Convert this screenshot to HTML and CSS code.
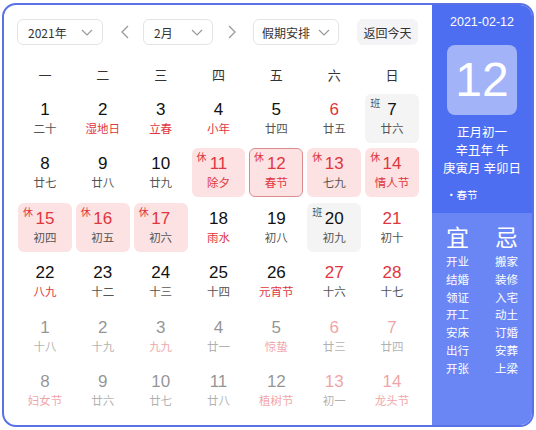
FILE: index.html
```html
<!DOCTYPE html>
<html lang="zh">
<head>
<meta charset="utf-8">
<link rel="stylesheet" href="styles.css">
</head>
<body>
<div class="cal">
  <div class="main">
    <div class="toolbar">
      <div class="select sel-year"><span>2021年</span><svg class="chev" viewBox="0 0 12 7"><path d="M1 1l5 5 5-5"/></svg></div>
      <svg class="arrow" viewBox="0 0 8 14"><path d="M7 1L1 7l6 6"/></svg>
      <div class="select sel-month"><span>2月</span><svg class="chev" viewBox="0 0 12 7"><path d="M1 1l5 5 5-5"/></svg></div>
      <svg class="arrow" viewBox="0 0 8 14"><path d="M1 1l6 6-6 6"/></svg>
      <div class="select sel-hol"><span>假期安排</span><svg class="chev" viewBox="0 0 12 7"><path d="M1 1l5 5 5-5"/></svg></div>
      <div class="today-btn">返回今天</div>
    </div>
    <div class="weekhead">
      <span>一</span><span>二</span><span>三</span><span>四</span><span>五</span><span>六</span><span>日</span>
    </div>
    <div class="grid">
      <div class="cell"><b class="n">1</b><i class="l">二十</i></div>
      <div class="cell"><b class="n">2</b><i class="l red">湿地日</i></div>
      <div class="cell"><b class="n">3</b><i class="l red">立春</i></div>
      <div class="cell"><b class="n">4</b><i class="l red">小年</i></div>
      <div class="cell"><b class="n">5</b><i class="l">廿四</i></div>
      <div class="cell"><b class="n red">6</b><i class="l">廿五</i></div>
      <div class="cell work"><em class="tag">班</em><b class="n">7</b><i class="l">廿六</i></div>

      <div class="cell"><b class="n">8</b><i class="l">廿七</i></div>
      <div class="cell"><b class="n">9</b><i class="l">廿八</i></div>
      <div class="cell"><b class="n">10</b><i class="l">廿九</i></div>
      <div class="cell rest"><em class="tag">休</em><b class="n red">11</b><i class="l red">除夕</i></div>
      <div class="cell rest sel"><em class="tag">休</em><b class="n red">12</b><i class="l red">春节</i></div>
      <div class="cell rest"><em class="tag">休</em><b class="n red">13</b><i class="l">七九</i></div>
      <div class="cell rest"><em class="tag">休</em><b class="n red">14</b><i class="l red">情人节</i></div>

      <div class="cell rest"><em class="tag">休</em><b class="n red">15</b><i class="l">初四</i></div>
      <div class="cell rest"><em class="tag">休</em><b class="n red">16</b><i class="l">初五</i></div>
      <div class="cell rest"><em class="tag">休</em><b class="n red">17</b><i class="l">初六</i></div>
      <div class="cell"><b class="n">18</b><i class="l red">雨水</i></div>
      <div class="cell"><b class="n">19</b><i class="l">初八</i></div>
      <div class="cell work"><em class="tag">班</em><b class="n">20</b><i class="l">初九</i></div>
      <div class="cell"><b class="n red">21</b><i class="l">初十</i></div>

      <div class="cell"><b class="n">22</b><i class="l red">八九</i></div>
      <div class="cell"><b class="n">23</b><i class="l">十二</i></div>
      <div class="cell"><b class="n">24</b><i class="l">十三</i></div>
      <div class="cell"><b class="n">25</b><i class="l">十四</i></div>
      <div class="cell"><b class="n">26</b><i class="l red">元宵节</i></div>
      <div class="cell"><b class="n red">27</b><i class="l">十六</i></div>
      <div class="cell"><b class="n red">28</b><i class="l">十七</i></div>

      <div class="cell other"><b class="n">1</b><i class="l">十八</i></div>
      <div class="cell other"><b class="n">2</b><i class="l">十九</i></div>
      <div class="cell other"><b class="n">3</b><i class="l red">九九</i></div>
      <div class="cell other"><b class="n">4</b><i class="l">廿一</i></div>
      <div class="cell other"><b class="n">5</b><i class="l red">惊蛰</i></div>
      <div class="cell other"><b class="n red">6</b><i class="l">廿三</i></div>
      <div class="cell other"><b class="n red">7</b><i class="l">廿四</i></div>

      <div class="cell other"><b class="n">8</b><i class="l red">妇女节</i></div>
      <div class="cell other"><b class="n">9</b><i class="l">廿六</i></div>
      <div class="cell other"><b class="n">10</b><i class="l">廿七</i></div>
      <div class="cell other"><b class="n">11</b><i class="l">廿八</i></div>
      <div class="cell other"><b class="n">12</b><i class="l red">植树节</i></div>
      <div class="cell other"><b class="n red">13</b><i class="l">初一</i></div>
      <div class="cell other"><b class="n red">14</b><i class="l red">龙头节</i></div>
    </div>
  </div>
  <div class="side">
    <div class="side-top">
      <div class="s-date">2021-02-12</div>
      <div class="s-day">12</div>
      <div class="s-lunar">正月初一<br>辛丑年 牛<br>庚寅月 辛卯日</div>
      <div class="s-fest">•春节</div>
    </div>
    <div class="side-bottom">
      <div class="yj">
        <div class="yj-head">宜</div>
        <div>开业</div><div>结婚</div><div>领证</div><div>开工</div><div>安床</div><div>出行</div><div>开张</div>
      </div>
      <div class="yj">
        <div class="yj-head">忌</div>
        <div>搬家</div><div>装修</div><div>入宅</div><div>动土</div><div>订婚</div><div>安葬</div><div>上梁</div>
      </div>
    </div>
  </div>
</div>
</body>
</html>
```

FILE: styles.css
```css
html, body {
  margin: 0;
  padding: 0;
  background: #fff;
}
body {
  font-family: "Noto Sans CJK SC", "Liberation Sans", sans-serif;
  color: #333;
}
.cal {
  margin: 3px 2px;
  width: 532px;
  height: 424px;
  box-sizing: border-box;
  border: 2px solid #5872e6;
  border-radius: 14px;
  overflow: hidden;
  display: flex;
}
.main {
  width: 428px;
  padding: 14px 13px 0 14px;
  box-sizing: border-box;
}
.toolbar {
  display: flex;
  align-items: center;
  height: 26px;
  margin-left: -1px;
}
.select {
  height: 26px;
  box-sizing: border-box;
  border: 1px solid #e4e4e6;
  border-radius: 6px;
  display: flex;
  align-items: center;
  justify-content: space-between;
  padding: 0 9px 0 10px;
  font-size: 12px;
  color: #333;
}
.sel-year { width: 86px; }
.sel-month { width: 70px; }
.sel-hol { width: 86px; padding-left: 8px; padding-right: 8px; }
.chev {
  width: 12px;
  height: 7px;
  fill: none;
  stroke: #999;
  stroke-width: 1.2;
}
.arrow {
  width: 8px;
  height: 14px;
  fill: none;
  stroke: #999;
  stroke-width: 1.3;
  margin: 0 14px 0 18px;
}
.sel-month + .arrow { margin: 0 17px 0 15px; }
.today-btn {
  margin-left: 18px;
  height: 26px;
  width: 61px;
  border-radius: 6px;
  background: #f4f4f6;
  font-size: 12px;
  color: #333;
  display: flex;
  align-items: center;
  justify-content: center;
}
.weekhead {
  margin-top: 14px;
  height: 30px;
  display: grid;
  grid-template-columns: repeat(7, 1fr);
  column-gap: 4px;
  width: 401px;
  align-items: center;
  text-align: center;
  font-size: 13px;
  color: #333;
}
.grid {
  margin-top: 5px;
  width: 401px;
  display: grid;
  grid-template-columns: repeat(7, 1fr);
  grid-auto-rows: 49px;
  column-gap: 4px;
  row-gap: 5.4px;
}
.cell {
  position: relative;
  border-radius: 6px;
  display: flex;
  flex-direction: column;
  align-items: center;
  padding-top: 6px;
  box-sizing: border-box;
}
.n {
  font-family: "Liberation Sans", Arial, sans-serif;
  font-weight: normal;
  font-size: 17px;
  line-height: 20px;
  color: #111;
}
.l {
  font-style: normal;
  font-size: 11.5px;
  line-height: 16px;
  color: #555;
}
.n.red, .l.red { color: #e0363e; }
.rest { background: #fde2e3; }
.work { background: #f4f4f5; }
.sel { border: 1.5px solid #d98b8e; padding-top: 4.5px; }
.tag {
  position: absolute;
  left: 5px;
  top: 3px;
  font-style: normal;
  font-size: 10px;
  line-height: 12px;
}
.rest .tag { color: #e0363e; }
.sel .tag { left: 3.5px; top: 1.5px; }
.work .tag { color: #555; }
.other { opacity: 0.45; }
.side {
  flex: 1;
  display: flex;
  flex-direction: column;
  color: #fff;
}
.side-top {
  background: #4e6ef2;
  height: 208px;
  display: flex;
  flex-direction: column;
  align-items: center;
  padding-top: 9px;
  box-sizing: border-box;
}
.s-date {
  font-family: "Liberation Sans", Arial, sans-serif;
  font-size: 12.5px;
  line-height: 16px;
}
.s-day {
  margin-top: 15px;
  width: 70px;
  height: 70px;
  border-radius: 8px;
  background: #a2b3f8;
  font-family: "Liberation Sans", Arial, sans-serif;
  font-size: 48px;
  line-height: 70px;
  text-align: center;
}
.s-lunar {
  margin-top: 8px;
  font-size: 12.5px;
  line-height: 18px;
  text-align: center;
}
.s-fest {
  align-self: flex-start;
  margin-top: 11px;
  margin-left: 14px;
  font-size: 10.5px;
  line-height: 14px;
}
.side-bottom {
  flex: 1;
  background: #6a86f5;
  display: flex;
  justify-content: center;
  gap: 26px;
  padding-top: 10px;
}
.yj {
  display: flex;
  flex-direction: column;
  align-items: center;
  font-size: 11.5px;
  line-height: 17.8px;
}
.yj-head {
  font-size: 23px;
  line-height: 26px;
  margin-bottom: 4px;
}
```
